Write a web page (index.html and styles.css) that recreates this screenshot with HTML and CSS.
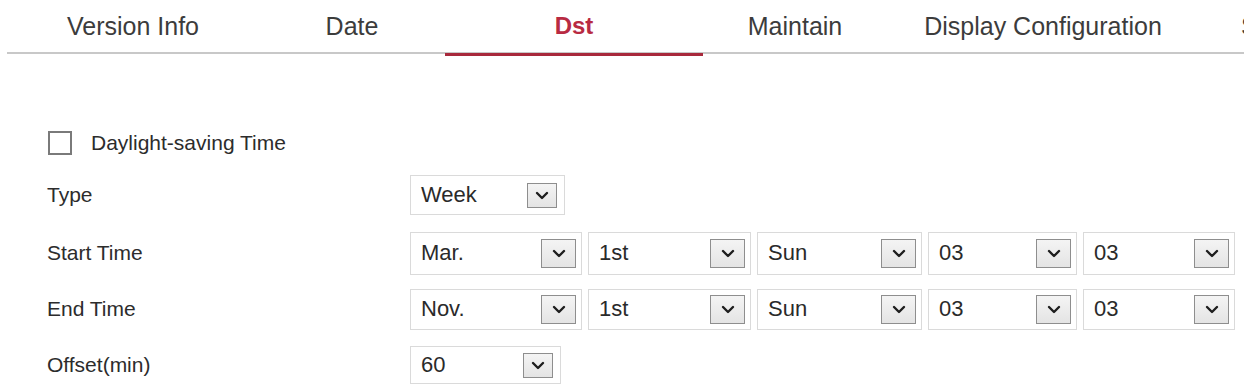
FILE: index.html
```html
<!DOCTYPE html>
<html>
<head>
<meta charset="utf-8">
<link rel="stylesheet" href="styles.css">
</head>
<body>
<div class="page">
  <nav class="tabs">
    <div class="tab t1">Version Info</div>
    <div class="tab t2">Date</div>
    <div class="tab t3 active">Dst</div>
    <div class="tab t4">Maintain</div>
    <div class="tab t5">Display Configuration</div>
    <div class="tab t6">System</div>
  </nav>

  <div class="form">
    <div class="row check-row">
      <span class="checkbox"></span>
      <span class="check-label">Daylight-saving Time</span>
    </div>

    <div class="row type-row">
      <span class="label">Type</span>
      <div class="fields">
        <div class="select small"><span class="val">Week</span><span class="arrow"><svg viewBox="0 0 14 9" width="14" height="9"><polyline points="2,2 7,7 12,2"/></svg></span></div>
      </div>
    </div>

    <div class="row">
      <span class="label">Start Time</span>
      <div class="fields">
        <div class="select w1"><span class="val">Mar.</span><span class="arrow"><svg viewBox="0 0 14 9" width="14" height="9"><polyline points="2,2 7,7 12,2"/></svg></span></div>
        <div class="select w2"><span class="val">1st</span><span class="arrow"><svg viewBox="0 0 14 9" width="14" height="9"><polyline points="2,2 7,7 12,2"/></svg></span></div>
        <div class="select w3"><span class="val">Sun</span><span class="arrow"><svg viewBox="0 0 14 9" width="14" height="9"><polyline points="2,2 7,7 12,2"/></svg></span></div>
        <div class="select w4"><span class="val">03</span><span class="arrow"><svg viewBox="0 0 14 9" width="14" height="9"><polyline points="2,2 7,7 12,2"/></svg></span></div>
        <div class="select w5"><span class="val">03</span><span class="arrow"><svg viewBox="0 0 14 9" width="14" height="9"><polyline points="2,2 7,7 12,2"/></svg></span></div>
      </div>
    </div>

    <div class="row">
      <span class="label">End Time</span>
      <div class="fields">
        <div class="select w1 short"><span class="val">Nov.</span><span class="arrow"><svg viewBox="0 0 14 9" width="14" height="9"><polyline points="2,2 7,7 12,2"/></svg></span></div>
        <div class="select w2 short"><span class="val">1st</span><span class="arrow"><svg viewBox="0 0 14 9" width="14" height="9"><polyline points="2,2 7,7 12,2"/></svg></span></div>
        <div class="select w3 short"><span class="val">Sun</span><span class="arrow"><svg viewBox="0 0 14 9" width="14" height="9"><polyline points="2,2 7,7 12,2"/></svg></span></div>
        <div class="select w4 short"><span class="val">03</span><span class="arrow"><svg viewBox="0 0 14 9" width="14" height="9"><polyline points="2,2 7,7 12,2"/></svg></span></div>
        <div class="select w5 short"><span class="val">03</span><span class="arrow"><svg viewBox="0 0 14 9" width="14" height="9"><polyline points="2,2 7,7 12,2"/></svg></span></div>
      </div>
    </div>

    <div class="row">
      <span class="label">Offset(min)</span>
      <div class="fields">
        <div class="select small offset"><span class="val">60</span><span class="arrow"><svg viewBox="0 0 14 9" width="14" height="9"><polyline points="2,2 7,7 12,2"/></svg></span></div>
      </div>
    </div>
  </div>
</div>
</body>
</html>
```

FILE: styles.css
```css
* { box-sizing: border-box; }

html, body {
  margin: 0;
  padding: 0;
  background: #ffffff;
}

body {
  font-family: "Liberation Sans", Arial, sans-serif;
  color: #333333;
  width: 1251px;
  height: 385px;
  overflow: hidden;
}

.page {
  width: 1251px;
}

.tabs {
  display: flex;
  margin-left: 7px;
  width: 1237px;
  height: 54px;
  border-bottom: 2px solid #c8c8c8;
}

.tab {
  position: relative;
  flex: none;
  height: 52px;
  line-height: 52px;
  font-size: 25px;
  color: #3c3c3c;
  text-align: center;
  white-space: nowrap;
}

.t1 { width: 252px; }
.t2 { width: 186px; }
.t3 { width: 258px; }
.t4 { width: 184px; }
.t5 { width: 312px; }
.t6 { width: 45px; text-align: left; padding-left: 42px; overflow: hidden; }

.tab.active {
  color: #b82a42;
  font-weight: bold;
  font-size: 24px;
}

.tab.active::after {
  content: "";
  position: absolute;
  left: 0;
  right: 0;
  bottom: -4px;
  height: 3px;
  background: #a8293c;
}

.form {
  margin-top: 67px;
  padding-left: 47px;
}

.row {
  display: flex;
  align-items: center;
  height: 56px;
}

.check-row {
  height: 44px;
  margin-bottom: 2px;
  padding-left: 1px;
}

.type-row {
  margin-bottom: 2px;
}

.checkbox {
  width: 24px;
  height: 24px;
  border: 2px solid #7a7a7a;
  background: #fff;
  flex: none;
}

.check-label {
  margin-left: 19px;
  font-size: 21px;
  color: #2c2c2c;
}

.label {
  width: 363px;
  flex: none;
  font-size: 21px;
  color: #2c2c2c;
}

.fields {
  display: flex;
  gap: 6px;
}

.select {
  display: flex;
  align-items: center;
  justify-content: space-between;
  height: 43px;
  border: 1px solid #dadada;
  padding-left: 10px;
  padding-right: 5px;
  background: #fff;
}

.select.short { height: 41px; }

.select .val {
  font-size: 22px;
  color: #2a2a2a;
}

.arrow {
  display: flex;
  align-items: center;
  justify-content: center;
  width: 35px;
  height: 29px;
  border: 1px solid #8e8e8e;
  background: linear-gradient(#f4f4f4, #e4e4e4);
  flex: none;
}

.arrow svg polyline {
  fill: none;
  stroke: #1e1e1e;
  stroke-width: 2.4;
  stroke-linecap: round;
  stroke-linejoin: round;
}

.w1 { width: 172px; }
.w2 { width: 163px; }
.w3 { width: 165px; }
.w4 { width: 149px; }
.w5 { width: 152px; }

.select.small {
  width: 155px;
  height: 40px;
  padding-right: 7px;
}

.select.small .arrow {
  width: 30px;
  height: 25px;
}

.select.offset {
  width: 151px;
  height: 38px;
}
```
